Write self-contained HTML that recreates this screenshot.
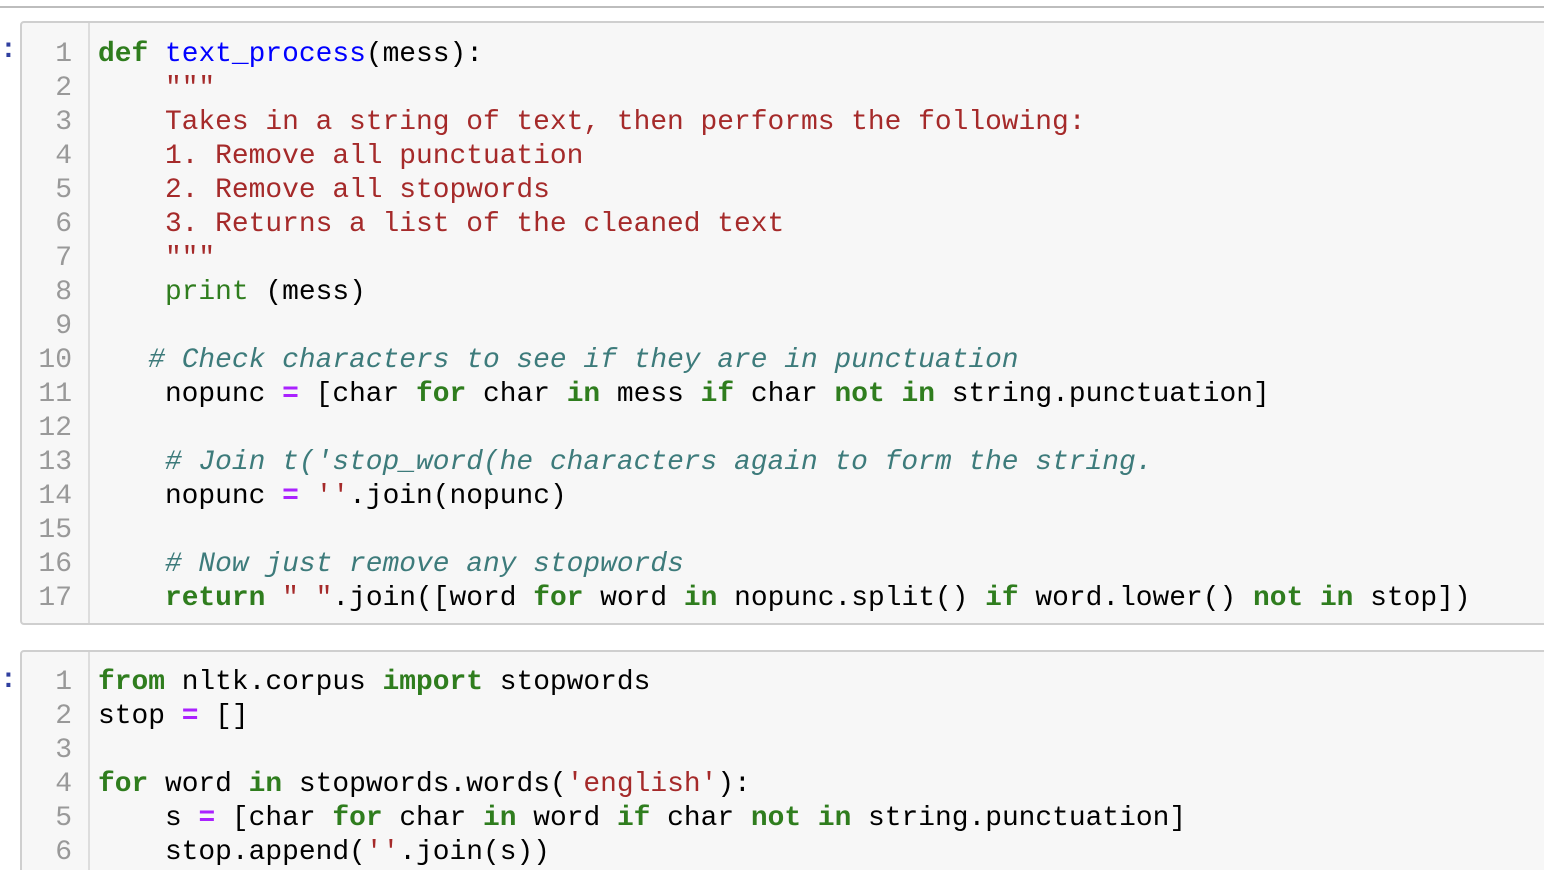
<!DOCTYPE html>
<html><head><meta charset="utf-8"><style>
html,body{margin:0;width:1544px;height:870px;background:#fff;overflow:hidden;position:relative;font-family:"Liberation Mono",monospace;}
.top{position:absolute;left:0;top:6px;width:1544px;height:2px;background:#bdbdbd;}
.cell{position:absolute;left:20px;width:1540px;background:#f7f7f7;border:2px solid #cfcfcf;border-radius:4px;box-sizing:border-box;}
.g{position:absolute;left:0;top:0;bottom:0;width:66px;border-right:2px solid #ddd;}
.ln{position:absolute;left:0;width:50px;text-align:right;color:#999;font-size:28px;line-height:34px;}
pre{position:absolute;left:76px;margin:0;font-family:"Liberation Mono",monospace;font-size:27.9px;line-height:34px;color:#000;}
.k{font-weight:bold;color:#2f7d1e}
.f{color:#0000ff}
.s{color:#a52a2a}
.c{font-style:italic;color:#3d7b7b}
.b{color:#2f7d1e}
.o{color:#aa22ff;font-weight:bold}
.p{position:absolute;left:0;color:#303f9f;font-size:28px;font-weight:bold;}
</style></head><body>
<div class="top"></div>
<div class="p" style="top:35px">:</div>
<div class="cell" style="top:21px;height:604px">
<div class="g"></div>
<div class="ln" style="top:15px">1<br>2<br>3<br>4<br>5<br>6<br>7<br>8<br>9<br>10<br>11<br>12<br>13<br>14<br>15<br>16<br>17</div>
<pre style="top:15px"><span class="k">def</span> <span class="f">text_process</span>(mess):
    <span class="s">"""</span>
<span class="s">    Takes in a string of text, then performs the following:</span>
<span class="s">    1. Remove all punctuation</span>
<span class="s">    2. Remove all stopwords</span>
<span class="s">    3. Returns a list of the cleaned text</span>
<span class="s">    """</span>
    <span class="b">print</span> (mess)

   <span class="c"># Check characters to see if they are in punctuation</span>
    nopunc <span class="o">=</span> [char <span class="k">for</span> char <span class="k">in</span> mess <span class="k">if</span> char <span class="k">not</span> <span class="k">in</span> string.punctuation]

    <span class="c"># Join t('stop_word(he characters again to form the string.</span>
    nopunc <span class="o">=</span> <span class="s">''</span>.join(nopunc)

    <span class="c"># Now just remove any stopwords</span>
    <span class="k">return</span> <span class="s">" "</span>.join([word <span class="k">for</span> word <span class="k">in</span> nopunc.split() <span class="k">if</span> word.lower() <span class="k">not</span> <span class="k">in</span> stop])</pre>
</div>
<div class="p" style="top:665px">:</div>
<div class="cell" style="top:650px;height:260px">
<div class="g"></div>
<div class="ln" style="top:14px">1<br>2<br>3<br>4<br>5<br>6</div>
<pre style="top:14px"><span class="k">from</span> nltk.corpus <span class="k">import</span> stopwords
stop <span class="o">=</span> []

<span class="k">for</span> word <span class="k">in</span> stopwords.words(<span class="s">'english'</span>):
    s <span class="o">=</span> [char <span class="k">for</span> char <span class="k">in</span> word <span class="k">if</span> char <span class="k">not</span> <span class="k">in</span> string.punctuation]
    stop.append(<span class="s">''</span>.join(s))</pre>
</div>
</body></html>
